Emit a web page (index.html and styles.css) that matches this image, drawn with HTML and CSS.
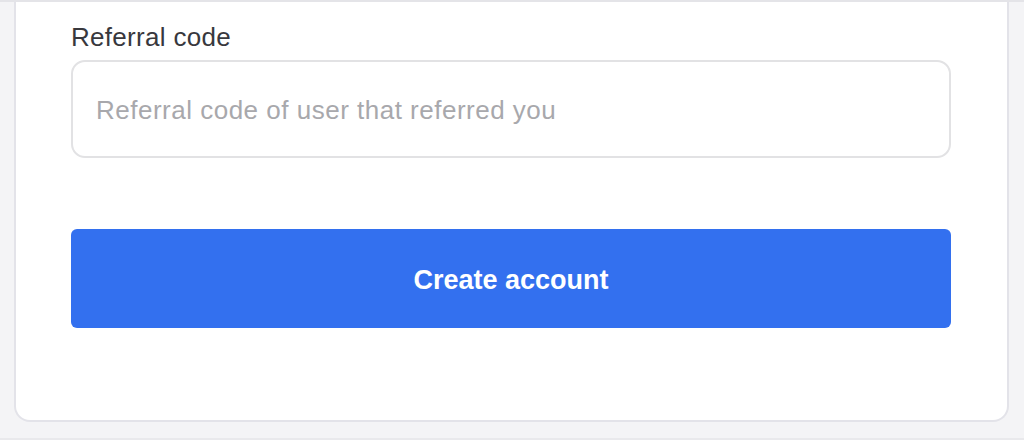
FILE: index.html
```html
<!DOCTYPE html>
<html lang="en">
<head>
<meta charset="utf-8">
<title>Referral code</title>
<link rel="stylesheet" href="styles.css">
</head>
<body>
<div class="page">
  <div class="card">
    <form class="form">
      <label class="field">
        <span class="label">Referral code</span>
        <input class="input" type="text" placeholder="Referral code of user that referred you">
      </label>
      <button class="submit" type="button">Create account</button>
    </form>
  </div>
</div>
</body>
</html>
```

FILE: styles.css
```css
html, body {
  margin: 0;
  padding: 0;
  background: #f4f4f6;
  font-family: "Liberation Sans", Arial, Helvetica, sans-serif;
}

.page {
  height: 440px;
  box-sizing: border-box;
  border-top: 2px solid #e4e4e8;
  border-bottom: 2px solid #e9e9ec;
  padding: 0 15px 16px 14px;
  display: flex;
  flex-direction: column;
  justify-content: flex-end;
}

.card {
  flex: 1;
  background: #ffffff;
  border: 2px solid #e3e3e9;
  border-top: none;
  border-radius: 0 0 16px 16px;
  padding: 0 56px 0 55px;
}

.form {
  display: flex;
  flex-direction: column;
}

.field {
  display: flex;
  flex-direction: column;
  gap: 7px;
  padding-top: 20px;
}

.label {
  font-size: 26px;
  line-height: 31px;
  color: #38383d;
  letter-spacing: 0.3px;
}

.input {
  height: 98px;
  box-sizing: border-box;
  border: 2px solid #e2e2e4;
  border-radius: 14px;
  padding: 3px 23px 0;
  font-family: inherit;
  font-size: 26px;
  letter-spacing: 0.5px;
  color: #333;
  background: #fff;
  outline: none;
}

.input::placeholder {
  color: #a8a8ac;
}

.submit {
  margin-top: 71px;
  height: 99px;
  padding-top: 5px;
  border: none;
  border-radius: 6px;
  background: #3370ef;
  color: #ffffff;
  font-family: inherit;
  font-size: 27px;
  font-weight: 700;
  letter-spacing: 0;
}
```
